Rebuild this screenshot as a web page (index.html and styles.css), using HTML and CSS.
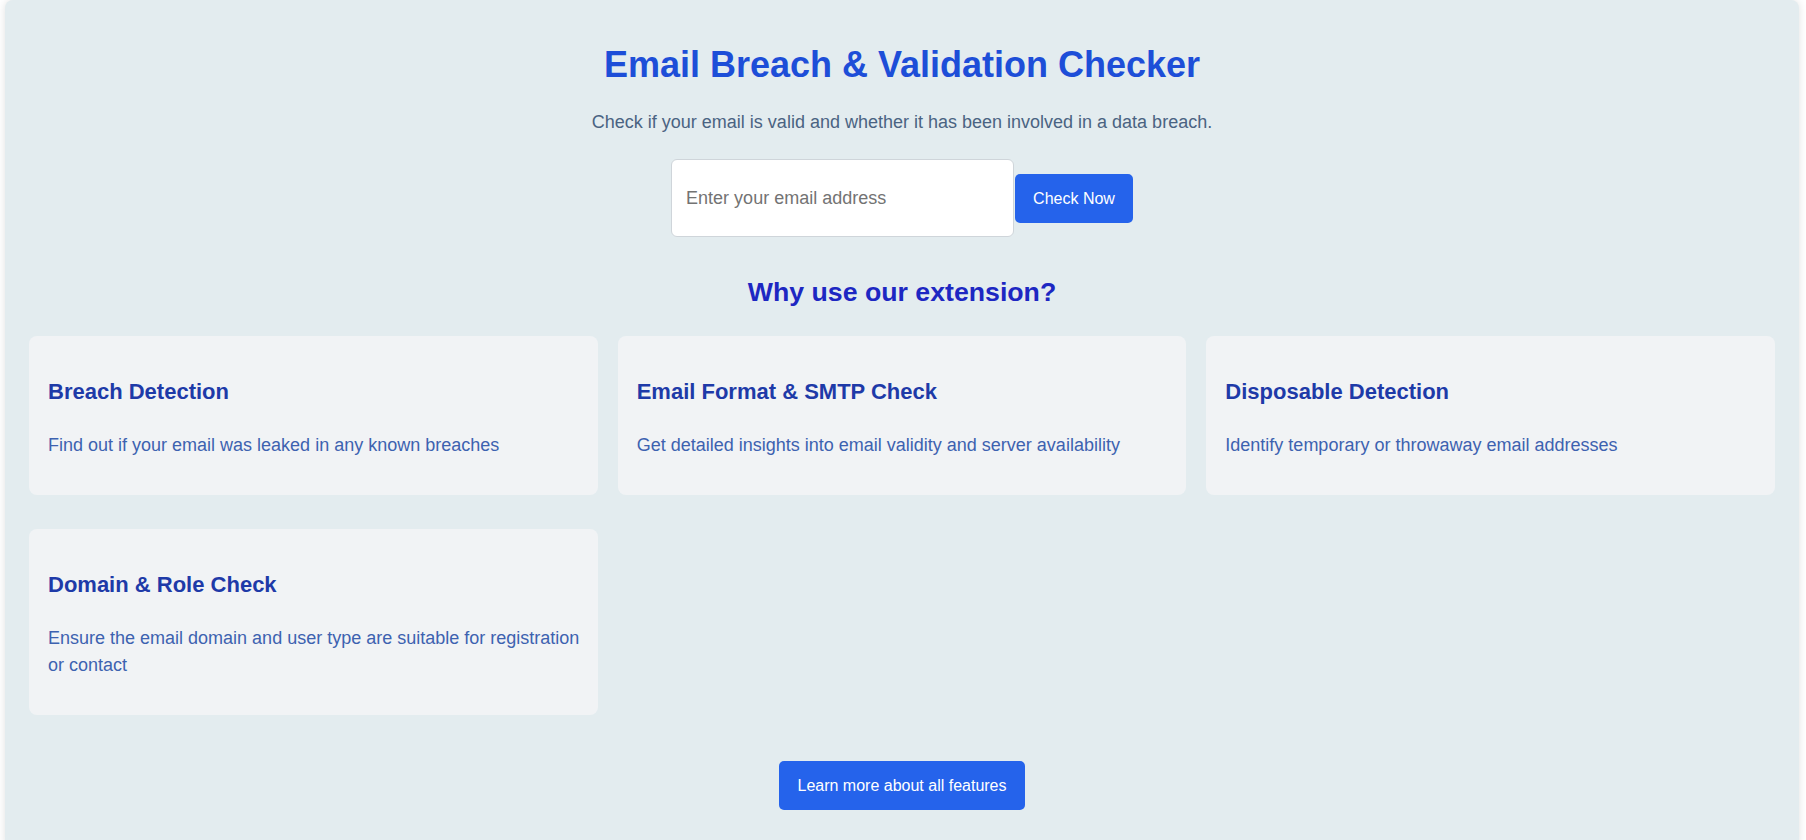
FILE: index.html
```html
<!DOCTYPE html>
<html lang="en">
<head>
<meta charset="utf-8">
<title>Email Breach &amp; Validation Checker</title>
<link rel="stylesheet" href="styles.css">
</head>
<body>
<main class="container">
  <h1 class="title">Email Breach &amp; Validation Checker</h1>
  <p class="subtitle">Check if your email is valid and whether it has been involved in a data breach.</p>
  <form class="check-form" onsubmit="return false;">
    <input class="email-input" type="email" placeholder="Enter your email address">
    <button class="btn btn-check" type="submit">Check Now</button>
  </form>
  <h2 class="section-title">Why use our extension?</h2>
  <div class="features">
    <div class="card">
      <h3 class="card-title">Breach Detection</h3>
      <p class="card-text">Find out if your email was leaked in any known breaches</p>
    </div>
    <div class="card">
      <h3 class="card-title">Email Format &amp; SMTP Check</h3>
      <p class="card-text">Get detailed insights into email validity and server availability</p>
    </div>
    <div class="card">
      <h3 class="card-title">Disposable Detection</h3>
      <p class="card-text">Identify temporary or throwaway email addresses</p>
    </div>
    <div class="card">
      <h3 class="card-title">Domain &amp; Role Check</h3>
      <p class="card-text">Ensure the email domain and user type are suitable for registration or contact</p>
    </div>
  </div>
  <div class="more">
    <button class="btn btn-more" type="button">Learn more about all features</button>
  </div>
</main>
</body>
</html>
```
FILE: styles.css
```css
* { box-sizing: border-box; }

html, body {
  margin: 0;
  padding: 0;
  background: #ffffff;
}

body {
  font-family: "Liberation Sans", Arial, sans-serif;
  overflow: hidden;
}

.container {
  width: 1794px;
  margin: 0 0 0 5px;
  background: #e3ecef;
  border-radius: 8px;
  padding: 24px 24px 40px;
  box-shadow: 0 0 8px rgba(0, 0, 0, 0.12);
  text-align: center;
}

.title {
  margin: 20px 0 0;
  font-size: 36px;
  line-height: 42px;
  font-weight: 700;
  color: #1d4ed8;
}

.subtitle {
  margin: 23px 0 0;
  font-size: 18px;
  line-height: 27px;
  color: #4a6382;
}

.check-form {
  margin: 23px 0 0;
  display: flex;
  justify-content: center;
  align-items: center;
}

.email-input {
  width: 343px;
  height: 78px;
  padding: 0 14px;
  border: 1px solid #cfd5da;
  border-radius: 6px;
  background: #ffffff;
  font-family: "Liberation Sans", Arial, sans-serif;
  font-size: 18px;
  color: #222;
  outline: none;
}

.email-input::placeholder {
  color: #737373;
}

.btn {
  border: none;
  background: #2563eb;
  color: #ffffff;
  font-family: "Liberation Sans", Arial, sans-serif;
  font-size: 16px;
  line-height: 19px;
  padding: 15px 18px;
  border-radius: 5px;
  cursor: pointer;
}

.btn-check {
  margin-left: 1px;
}

.section-title {
  margin: 39px 0 0;
  font-size: 26.7px;
  line-height: 32px;
  font-weight: 700;
  color: #1d27c2;
}

.features {
  margin-top: 28px;
  display: grid;
  grid-template-columns: repeat(3, 1fr);
  column-gap: 20px;
  row-gap: 34px;
  text-align: left;
}

.card {
  background: #f1f3f5;
  border-radius: 8px;
  padding: 20px 12px 20px 19px;
}

.card-title {
  margin: 19px 0 24px;
  font-size: 22px;
  line-height: 33px;
  font-weight: 700;
  color: #1e3aa8;
}

.card-text {
  margin: 0 0 16px;
  font-size: 18px;
  line-height: 27px;
  color: #3d62b0;
}

.more {
  margin-top: 46px;
  display: flex;
  justify-content: center;
}
```
